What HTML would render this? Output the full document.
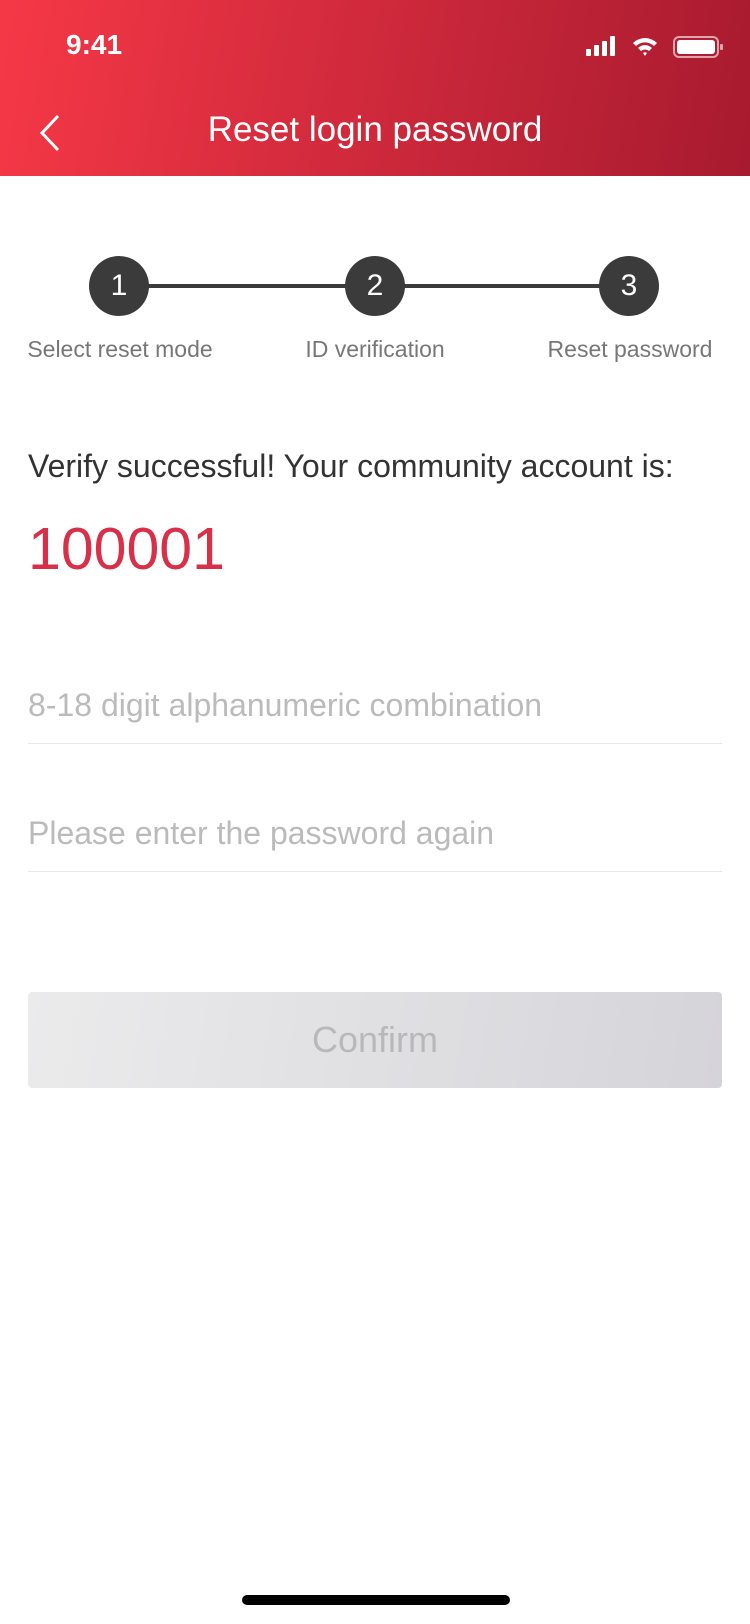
<!DOCTYPE html>
<html><head><meta charset="utf-8"><style>
*{margin:0;padding:0;box-sizing:border-box}
body{width:750px;height:1624px;background:#fff;font-family:"Liberation Sans",sans-serif;position:relative;overflow:hidden}
.hdr{position:absolute;left:0;top:0;width:750px;height:176px;background:linear-gradient(100deg,#f63846 0%,#d62c3e 40%,#a81a2f 100%)}
.abs{position:absolute;white-space:nowrap}
.c{position:absolute;width:60px;height:60px;border-radius:50%;background:#3b3b3b;color:#fff;font-size:30px;text-align:center;line-height:60px;top:256px}
.lbl{position:absolute;top:336px;font-size:23px;color:#777;transform:translateX(-50%);white-space:nowrap}
.line{position:absolute;left:28px;width:694px;height:1px;background:#e8e8e8}
</style></head><body>
<div class="hdr"></div>
<div class="abs" style="left:66px;top:29px;font-size:28px;font-weight:bold;color:#fff">9:41</div>
<svg class="abs" style="left:585px;top:34px" width="140" height="26" viewBox="0 0 140 26">
<rect x="1" y="15" width="5" height="7" rx="1" fill="#fff"/><rect x="9" y="11" width="5" height="11" rx="1" fill="#fff"/><rect x="17" y="7" width="5" height="15" rx="1" fill="#fff"/><rect x="25" y="2" width="5" height="20" rx="1" fill="#fff"/>
<path d="M48 9 A17 17 0 0 1 72 9 L69 12 A13 13 0 0 0 51 12Z M53 14 A10 10 0 0 1 67 14 L64 17 A6 6 0 0 0 56 17Z M58 19 A3 3 0 0 1 62 19 L60 22Z" fill="#fff"/>
<rect x="89" y="3" width="44" height="20" rx="5" fill="none" stroke="#fff" stroke-opacity=".6" stroke-width="2"/><rect x="92" y="6" width="38" height="14" rx="3" fill="#fff"/><rect x="135" y="10" width="3" height="6" rx="1" fill="#fff" fill-opacity=".6"/>
</svg>
<svg class="abs" style="left:38px;top:114px" width="24" height="38" viewBox="0 0 24 38"><path d="M20 2 L4 19 L20 36" fill="none" stroke="#fff" stroke-width="3"/></svg>
<div class="abs" style="left:0;width:750px;text-align:center;top:110px;font-size:35px;color:#fff">Reset login password</div>
<div class="abs" style="left:119px;top:284px;width:510px;height:4px;background:#3b3b3b"></div>
<div class="c" style="left:89px">1</div><div class="c" style="left:345px">2</div><div class="c" style="left:599px">3</div>
<div class="lbl" style="left:120px">Select reset mode</div>
<div class="lbl" style="left:375px">ID verification</div>
<div class="lbl" style="left:630px">Reset password</div>
<div class="abs" style="left:28px;top:448px;font-size:32px;color:#333">Verify successful! Your community account is:</div>
<div class="abs" style="left:28px;top:515px;font-size:59px;color:#d9304a">100001</div>
<div class="abs" style="left:28px;top:687px;font-size:32px;color:#bbb">8-18 digit alphanumeric combination</div>
<div class="line" style="top:743px"></div>
<div class="abs" style="left:28px;top:815px;font-size:32px;color:#bbb">Please enter the password again</div>
<div class="line" style="top:871px"></div>
<div class="abs" style="left:28px;top:992px;width:694px;height:96px;border-radius:4px;background:linear-gradient(100deg,#ebebec,#d5d4d9);text-align:center;line-height:96px;font-size:36px;color:#b8b8bb">Confirm</div>
<div class="abs" style="left:242px;top:1595px;width:268px;height:10px;border-radius:5px;background:#000"></div>
</body></html>
